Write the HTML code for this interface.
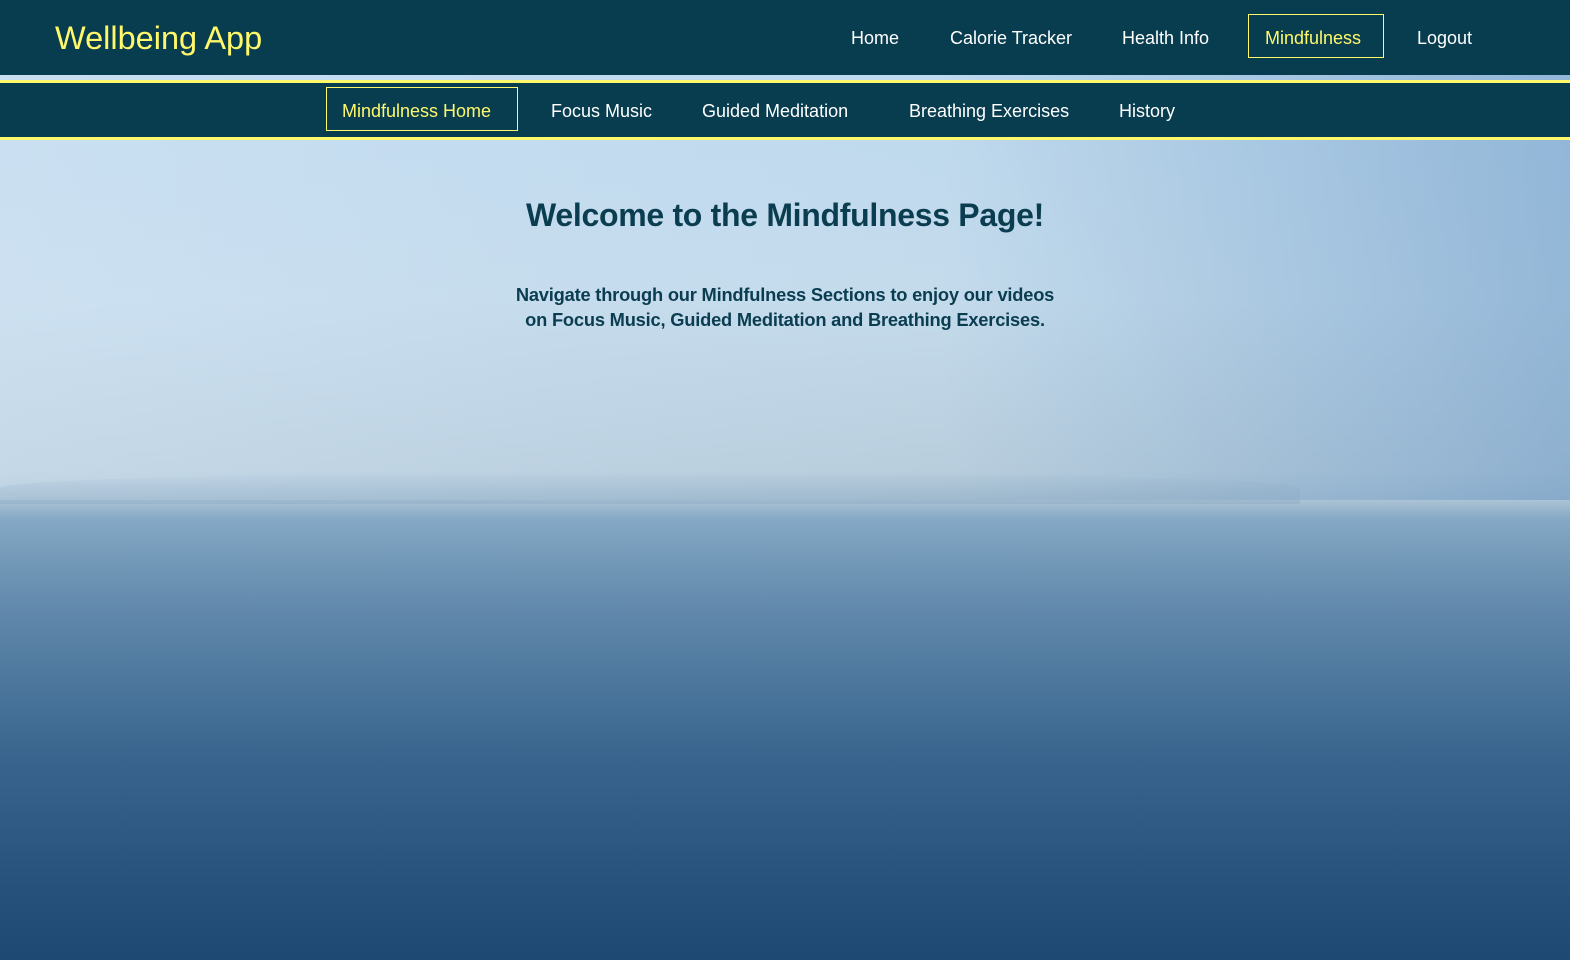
<!DOCTYPE html>
<html><head><meta charset="utf-8"><style>
*{margin:0;padding:0;box-sizing:border-box}
html,body{width:1570px;height:960px;overflow:hidden}
body{font-family:"Liberation Sans",sans-serif;position:relative;
background:
linear-gradient(180deg,rgba(0,0,0,0) 0px,rgba(0,0,0,0) 500px,rgba(20,60,100,0.1) 600px,rgba(10,40,80,0.35) 960px),
linear-gradient(180deg,#bcd8ee 0px,#c4dbec 300px,#b9cedd 470px,#abc3d5 500px,#86aac6 520px,#6890b3 620px,#44739c 760px,#285a84 960px);}
.sky{position:absolute;left:0;top:0;width:1570px;height:500px;background:linear-gradient(90deg,rgba(220,235,250,0.35) 0%,rgba(210,230,248,0.15) 35%,rgba(120,160,200,0.0) 60%,rgba(90,140,190,0.45) 100%)}
.hz{position:absolute;left:0;top:472px;width:1300px;height:32px;background:linear-gradient(180deg,rgba(150,180,200,0) 0,rgba(140,170,195,0.45) 100%);border-radius:50% 50% 0 0}
.top{position:absolute;left:0;top:0;width:1570px;height:75px;background:#083d4f}
.sub{position:absolute;left:0;top:80px;width:1570px;height:60px;background:#083d4f;border-top:3px solid #fff86a;border-bottom:3px solid #fff86a}
.logo{position:absolute;left:55px;top:20px;font-size:32.5px;color:#fff86a}
.n{position:absolute;color:#fff;font-size:18px;white-space:nowrap;line-height:20px}
.box{position:absolute;border:1.5px solid #fff86a}
.y{color:#fff86a}
h1{position:absolute;left:0;width:1570px;top:197px;text-align:center;font-size:32px;color:#0a3d50;font-weight:bold;letter-spacing:-0.3px}
p{position:absolute;left:0;width:1570px;top:282px;text-align:center;font-size:18.3px;line-height:25px;color:#0a3d50;font-weight:bold;letter-spacing:-0.2px}
</style></head><body>
<div class="sky"></div><div class="hz"></div>
<div class="top"></div>
<div class="logo">Wellbeing App</div>
<div class="n" style="left:851px;top:28px">Home</div>
<div class="n" style="left:950px;top:28px">Calorie Tracker</div>
<div class="n" style="left:1122px;top:28px">Health Info</div>
<div class="box" style="left:1248px;top:14px;width:136px;height:44px"></div>
<div class="n y" style="left:1265px;top:28px">Mindfulness</div>
<div class="n" style="left:1417px;top:28px">Logout</div>
<div class="sub"></div>
<div class="box" style="left:326px;top:87px;width:192px;height:44px"></div>
<div class="n y" style="left:342px;top:101px">Mindfulness Home</div>
<div class="n" style="left:551px;top:101px">Focus Music</div>
<div class="n" style="left:702px;top:101px">Guided Meditation</div>
<div class="n" style="left:909px;top:101px">Breathing Exercises</div>
<div class="n" style="left:1119px;top:101px">History</div>
<h1>Welcome to the Mindfulness Page!</h1>
<p>Navigate through our Mindfulness Sections to enjoy our videos<br>on Focus Music, Guided Meditation and Breathing Exercises.</p>
</body></html>
